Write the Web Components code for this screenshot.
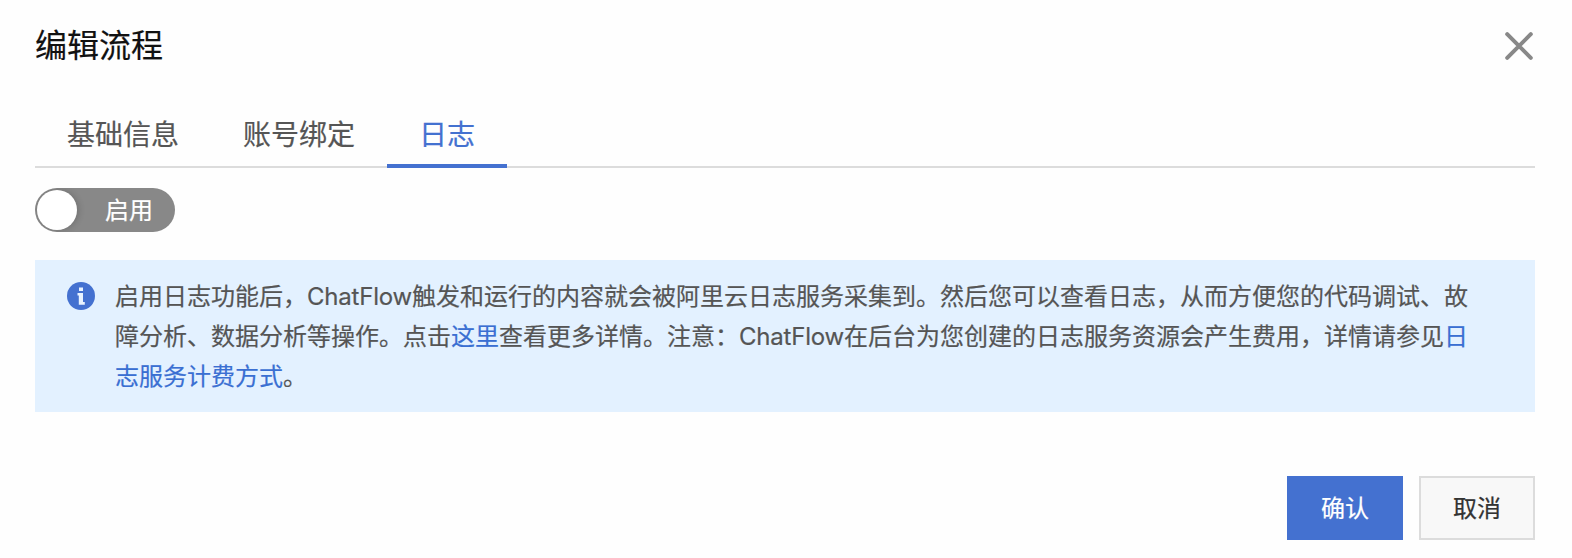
<!DOCTYPE html>
<html lang="zh-CN">
<head>
<meta charset="utf-8">
<title>编辑流程</title>
<style>
  body {
    margin: 0;
    background-color: #fefefe;
    font-family: Inter, "Noto Sans CJK SC", sans-serif;
    font-size: 24px;
    color: #555;
    -webkit-text-stroke: 0.2px;
  }
  .latin {
    letter-spacing: -0.2px;
  }
</style>
</head>
<body>
<flow-dialog>
  <span slot="title">编辑流程</span>
  <tab-bar>
    <tab-item>基础信息</tab-item>
    <tab-item>账号绑定</tab-item>
    <tab-item active>日志</tab-item>
  </tab-bar>
  <toggle-switch>启用</toggle-switch>
  <info-message>启用日志功能后，<span class="latin">ChatFlow</span>触发和运行的内容就会被阿里云日志服务采集到。然后您可以查看日志，从而方便您的代码调试、故障分析、数据分析等操作。点击<text-link>这里</text-link>查看更多详情。注意：<span class="latin">ChatFlow</span>在后台为您创建的日志服务资源会产生费用，详情请参见<text-link>日志服务计费方式</text-link>。</info-message>
  <dialog-button slot="footer" primary>确认</dialog-button>
  <dialog-button slot="footer">取消</dialog-button>
</flow-dialog>

<script>
/**
 * Registers a custom element that renders the given markup in its shadow root.
 *
 * @param {string} name - the tag name.
 * @param {string} markup - styles and markup of the element.
 * @param {Function} setup - called with the element when it is created.
 */
function define (name, markup, setup) {
  const template = document.createElement('template')
  template.innerHTML = markup.trim()
  customElements.define(name, class extends HTMLElement {
    constructor () {
      super()
      this.attachShadow({ mode: 'open' })
        .appendChild(template.content.cloneNode(true))
      if (setup) {
        setup(this)
      }
    }
  })
}

define('flow-dialog', `
<style>
  :host {
    display: flex;
    flex-direction: column;
    box-sizing: border-box;
    height: 558px;
    padding: 21px 37px 18px 35px;
  }
  header {
    display: flex;
    align-items: center;
    justify-content: space-between;
    height: 48px;
  }
  h2 {
    margin: 0;
    font-size: 32px;
    font-weight: 400;
    line-height: 49px;
    color: #111;
  }
  button {
    display: block;
    margin: 0;
    padding: 0;
    border: none;
    background: none;
    cursor: pointer;
  }
  svg {
    display: block;
  }
  main {
    flex: 1;
    padding-top: 31px;
  }
  footer {
    display: flex;
    justify-content: flex-end;
    gap: 16px;
  }
</style>
<header>
  <h2><slot name="title"></slot></h2>
  <button aria-label="close">
    <svg width="32" height="32" viewBox="0 0 32 32" fill="none" stroke="#888" stroke-width="4" stroke-linecap="round">
      <path d="M4.200 5.200L27.800 28.800M27.800 5.200L4.200 28.800"/>
    </svg>
  </button>
</header>
<main><slot></slot></main>
<footer><slot name="footer"></slot></footer>
`)

define('tab-bar', `
<style>
  :host {
    display: flex;
    height: 68px;
    box-shadow: inset 0 -2px #dcdcdc;
  }
</style>
<slot></slot>
`)

define('tab-item', `
<style>
  :host {
    display: block;
    box-sizing: border-box;
    padding: 2px 32px 0;
    border-bottom: 4px solid transparent;
    font-size: 28px;
    line-height: 67px;
    cursor: pointer;
  }
  :host([active]) {
    height: 68px;
    border-color: #4471d0;
    color: #4471d0;
  }
</style>
<slot></slot>
`)

define('toggle-switch', `
<style>
  :host {
    display: flex;
    align-items: center;
    box-sizing: border-box;
    width: 140px;
    height: 44px;
    margin-top: 20px;
    padding: 2px;
    border-radius: 22px;
    background-color: #888;
    color: #fff;
    line-height: 42px;
    overflow: hidden;
    cursor: pointer;
  }
  .knob {
    width: 40px;
    height: 40px;
    margin-right: 28px;
    border-radius: 50%;
    background-color: #fff;
    box-shadow: 2px 0 6px rgba(0, 0, 0, 0.16);
  }
  .label {
    padding-top: 1px;
  }
  :host([checked]) {
    background-color: #4471d0;
  }
</style>
<div class="knob"></div>
<div class="label"><slot></slot></div>
`, (element) => {
  element.addEventListener('click', () => element.toggleAttribute('checked'))
})

define('info-message', `
<style>
  :host {
    display: flex;
    align-items: flex-start;
    gap: 20px;
    margin-top: 28px;
    padding: 17px 64px 15px 32px;
    background-color: #e3f1ff;
    line-height: 40px;
  }
  svg {
    flex: none;
    margin-top: 5px;
  }
  p {
    flex: 1;
    margin: 0;
  }
</style>
<svg width="28" height="28" viewBox="0 0 28 28">
  <circle cx="14" cy="14" r="14" fill="#4471d0"/>
  <path d="M12 5.500h4v3.600h-4zM10.500 11h5.500v9h1.800v2.700h-6V13.600h-1.300z" fill="#e9f3ff"/>
</svg>
<p><slot></slot></p>
`)

// no whitespace round the slot, the link sits inside running text
define('text-link', `
<style>
  :host {
    display: inline;
    color: #3a6fd2;
    cursor: pointer;
  }
</style><slot></slot>
`)

define('dialog-button', `
<style>
  :host {
    display: block;
    box-sizing: border-box;
    width: 116px;
    height: 64px;
    padding-top: 1px;
    border: 2px solid #dcdcdc;
    background-color: #f8f8f8;
    color: #333;
    line-height: 60px;
    text-align: center;
    cursor: pointer;
  }
  :host([primary]) {
    border-color: #4471d0;
    background-color: #4471d0;
    color: #fff;
  }
</style>
<slot></slot>
`)
</script>
</body>
</html>
